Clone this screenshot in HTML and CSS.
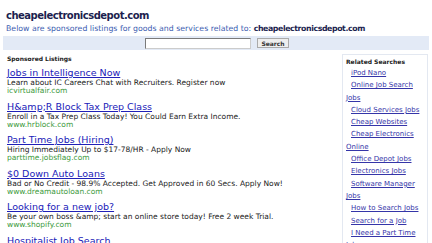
FILE: index.html
```html
<!DOCTYPE html>
<html lang="en">
<head>
  <meta charset="UTF-8">
  <title>cheapelectronicsdepot.com</title>
  <link rel="stylesheet" href="styles.css">
</head>
<body>
  <div class="page">
    <!-- Header -->
    <header class="top">
      <h1>cheapelectronicsdepot.com</h1>
      <p class="intro">Below are sponsored listings for goods and services related to: <b>cheapelectronicsdepot.com</b></p>
    </header>

    <!-- Search band -->
    <form class="searchbar">
      <input type="text" class="query">
      <button type="button" class="go">Search</button>
    </form>

    <div class="content">
      <!-- Sponsored listings -->
      <section class="listings">
        <h2>Sponsored Listings</h2>
        <div class="ad">
          <a href="#" class="ad-title">Jobs in Intelligence Now</a>
          <p class="ad-desc">Learn about IC Careers Chat with Recruiters. Register now</p>
          <p class="ad-url">icvirtualfair.com</p>
        </div>
        <div class="ad">
          <a href="#" class="ad-title">H&amp;amp;R Block Tax Prep Class</a>
          <p class="ad-desc">Enroll in a Tax Prep Class Today! You Could Earn Extra Income.</p>
          <p class="ad-url">www.hrblock.com</p>
        </div>
        <div class="ad">
          <a href="#" class="ad-title">Part Time Jobs (Hiring)</a>
          <p class="ad-desc">Hiring Immediately Up to $17-78/HR - Apply Now</p>
          <p class="ad-url">parttime.jobsflag.com</p>
        </div>
        <div class="ad">
          <a href="#" class="ad-title">$0 Down Auto Loans</a>
          <p class="ad-desc">Bad or No Credit - 98.9% Accepted. Get Approved in 60 Secs. Apply Now!</p>
          <p class="ad-url">www.dreamautoloan.com</p>
        </div>
        <div class="ad">
          <a href="#" class="ad-title">Looking for a new job?</a>
          <p class="ad-desc">Be your own boss &amp;amp; start an online store today! Free 2 week Trial.</p>
          <p class="ad-url">www.shopify.com</p>
        </div>
        <div class="ad">
          <a href="#" class="ad-title">Hospitalist Job Search</a>
          <p class="ad-desc">Find Hospitalist Jobs Near You. Apply Today.</p>
          <p class="ad-url">www.indeed.com</p>
        </div>
      </section>

      <!-- Related searches -->
      <aside class="related">
        <h3>Related Searches</h3>
        <ul>
          <li><a href="#">iPod Nano</a></li>
          <li><a href="#">Online Job Search Jobs</a></li>
          <li><a href="#">Cloud Services Jobs</a></li>
          <li><a href="#">Cheap Websites</a></li>
          <li><a href="#">Cheap Electronics Online</a></li>
          <li><a href="#">Office Depot Jobs</a></li>
          <li><a href="#">Electronics Jobs</a></li>
          <li><a href="#">Software Manager Jobs</a></li>
          <li><a href="#">How to Search Jobs</a></li>
          <li><a href="#">Search for a Job</a></li>
          <li><a href="#">I Need a Part Time Jobs</a></li>
        </ul>
      </aside>
    </div>
  </div>
</body>
</html>
```

FILE: styles.css
```css
body {
  margin: 0;
  padding: 0;
  font-family: "DejaVu Sans", Verdana, sans-serif;
  background: #fff;
  color: #222;
}
.page {
  padding: 0 3px;
}
.top {
  padding: 9px 3px 0;
}
.top h1 {
  margin: 0;
  font-size: 10px;
  line-height: 14px;
  letter-spacing: -0.5px;
  color: #1c1f4f;
}
.intro {
  margin: 1px 0 0;
  font-size: 7.8px;
  line-height: 10px;
  color: #3a5cb0;
}
.intro b {
  letter-spacing: -0.4px;
  color: #1c1f4f;
}
.searchbar {
  display: flex;
  justify-content: center;
  align-items: center;
  gap: 6px;
  height: 14px;
  margin: 2px 0 0;
  background: #e3eaf6;
}
.query {
  width: 104px;
  height: 9px;
  margin: 0 0 0 2px;
  padding: 0;
  border: 1px solid #7a7a7a;
  border-right-color: #ccc;
  border-bottom-color: #ccc;
  background: #fff;
}
.go {
  height: 10px;
  margin: 0;
  padding: 0 3px;
  font-family: inherit;
  font-size: 6px;
  font-weight: bold;
  color: #333;
  background: #eee;
  border: 1px solid #aaa;
}
.content {
  display: flex;
  justify-content: space-between;
  padding: 4px 1px 0 4px;
}
.listings h2 {
  margin: 1px 0 3px;
  font-size: 6px;
  line-height: 8px;
  color: #222;
}
.ad {
  height: 33.5px;
}
.ad-title {
  display: block;
  font-size: 9.5px;
  line-height: 13px;
  color: #2020b8;
  text-decoration: underline;
}
.ad p {
  margin: 0;
  font-size: 7.5px;
  line-height: 8px;
}
.ad-desc {
  color: #222;
}
.ad-url {
  color: #3c9a3c;
}
.related {
  width: 79px;
  padding: 1px 2px 0 3px;
  border: 1px solid #e3e8f1;
  border-bottom: none;
}
.related h3 {
  margin: 0;
  font-size: 6px;
  line-height: 11px;
  color: #222;
}
.related ul {
  margin: 0;
  padding: 0;
  list-style: none;
}
.related li {
  text-indent: 5px;
  font-size: 7px;
  line-height: 12.3px;
}
.related a {
  color: #3535a8;
}
```
